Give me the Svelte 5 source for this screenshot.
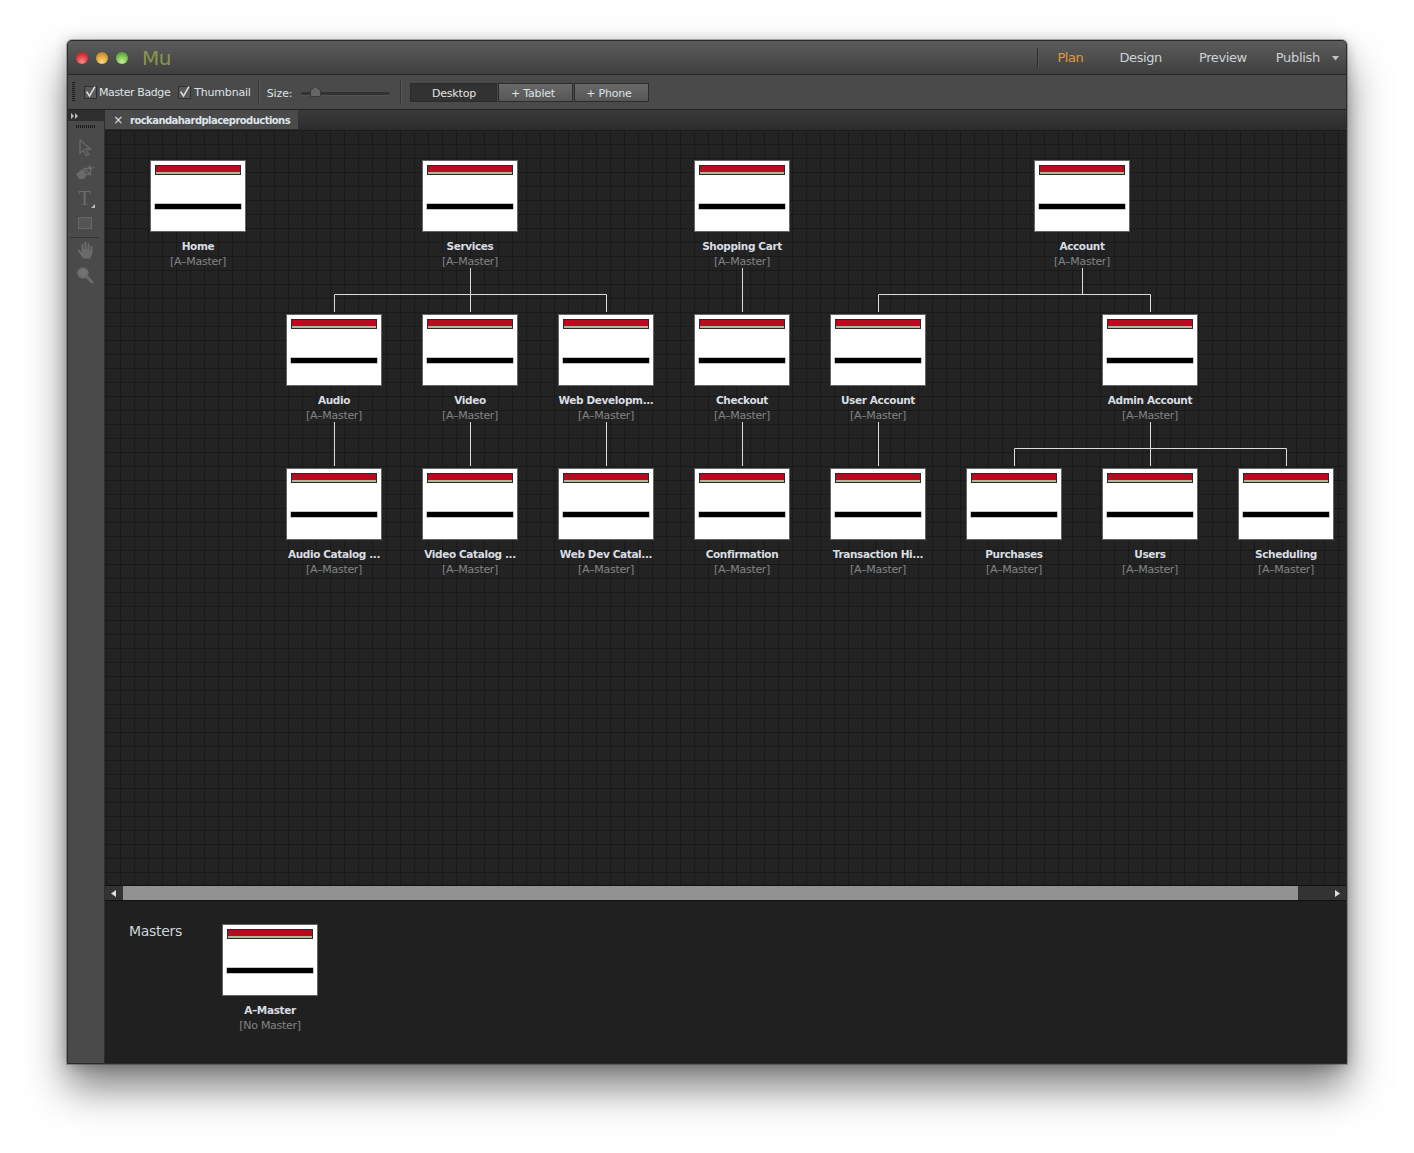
<script>
  const M = '[A–Master]';
  const nodes = [
    ['Home', 198, 0], ['Services', 470, 0], ['Shopping Cart', 742, 0], ['Account', 1082, 0],
    ['Audio', 334, 1], ['Video', 470, 1], ['Web Developm...', 606, 1], ['Checkout', 742, 1], ['User Account', 878, 1], ['Admin Account', 1150, 1],
    ['Audio Catalog ...', 334, 2], ['Video Catalog ...', 470, 2], ['Web Dev Catal...', 606, 2], ['Confirmation', 742, 2], ['Transaction Hi...', 878, 2], ['Purchases', 1014, 2], ['Users', 1150, 2], ['Scheduling', 1286, 2]
  ];
  // canvas origin: x 105, y 130
  const OX = 105, OY = 130;
  const links = [
    'M470.5 268V294.5M334.5 312V294.5H606.5V312M470.5 294.5V312',
    'M742.5 268V312',
    'M1082.5 268V294.5M878.5 312V294.5H1150.5V312',
    'M334.5 422V466M470.5 422V466M606.5 422V466M742.5 422V466M878.5 422V466',
    'M1150.5 422V466M1014.5 466V448.5H1286.5V466'
  ];
</script>

{#snippet thumb()}
  <div class="thumb">
    <div class="redbar"></div>
    <div class="blackbar"></div>
  </div>
{/snippet}

{#snippet tick()}
  <span class="box"><svg width="13" height="13" viewBox="0 0 13 13"><path d="M2.500 5.500L5.500 10L11 .5" fill="none" stroke="#d8d8d8" stroke-width="1.500"/></svg></span>
{/snippet}

<div class="page">
<div class="window">
  <header class="titlebar">
    <div class="lights">
      <span class="light red"></span>
      <span class="light amber"></span>
      <span class="light green"></span>
    </div>
    <div class="logo">Mu</div>
    <nav class="nav">
      <span class="navsep"></span>
      <span class="navitem plan">Plan</span>
      <span class="navitem design">Design</span>
      <span class="navitem preview">Preview</span>
      <span class="navitem publish">Publish</span>
      <svg class="caret" width="7" height="5" viewBox="0 0 7 5"><path d="M0 0H7L3.500 4.500Z" fill="#c4c4c4"/></svg>
    </nav>
  </header>

  <div class="toolbar">
    <span class="grip"></span>
    <label class="check first">
      {@render tick()}
      <span>Master Badge</span>
    </label>
    <label class="check second">
      {@render tick()}
      <span>Thumbnail</span>
    </label>
    <span class="tsep a"></span>
    <span class="sizelabel">Size:</span>
    <div class="slider">
      <svg class="knob" width="11" height="11" viewBox="0 0 11 11"><path d="M.5 4.500L5.500 .5L10.500 4.500V10.500H.5Z" fill="#666" stroke="#3a3a3a"/></svg>
    </div>
    <span class="tsep b"></span>
    <div class="modes">
      <button class="mode desktop">Desktop</button>
      <button class="mode plus">+ Tablet</button>
      <button class="mode plus">+ Phone</button>
    </div>
  </div>

  <div class="body">
    <aside class="tools">
      <div class="collapse">
        <svg width="8" height="6" viewBox="0 0 8 6"><path d="M0 0L3 3L0 6ZM4 0L7 3L4 6Z" fill="#bbb"/></svg>
      </div>
      <div class="toolgrip"></div>
      <div class="toollist">
        <svg class="tool arrow" width="16" height="18" viewBox="0 0 16 18"><path d="M3 1V14L6.500 11L9 16.500L11.500 15.500L9 10H13.500Z" fill="none" stroke="#696969" stroke-width="1.300"/></svg>
        <svg class="tool crop" width="20" height="20" viewBox="0 0 20 20"><path d="M1 10.500L3 10V8.500L4.500 9V7L6 7.500V6L7.500 7L9 8.500L11 10V13L9 16H4Z" fill="#6a6a6a"/><path d="M9 5.500H15.500V11.500H9ZM10 6.500L15 11M15.500 2.500L13.500 5.500M15.500 6V4M19 4L16 6" fill="none" stroke="#6a6a6a" stroke-width="1.400"/></svg>
        <div class="tool ttool">T<i></i></div>
        <div class="tool rect"></div>
        <div class="toolsep"></div>
        <svg class="tool hand" width="18" height="19" viewBox="0 0 18 19"><path d="M1.500 9.500L3 8.500L5.500 11V3.500L6.500 2.500L7.500 3.500V8H8.500V1.500L9.500 .5L10.500 1.500V8H11.500V3L12.500 2L13.500 3V9H14.500V5.500L15.500 4.500L16.500 5.500V12L14.500 17.500H7.500Z" fill="#6a6a6a"/></svg>
        <svg class="tool" width="18" height="18" viewBox="0 0 18 18"><circle cx="7" cy="7" r="5" fill="#727272" stroke="#6a6a6a" stroke-width="1.500"/><path d="M10.500 10.500L16 16" stroke="#6a6a6a" stroke-width="3" stroke-linecap="round"/></svg>
      </div>
    </aside>

    <main class="main">
      <div class="tabbar">
        <div class="tab">
          <span class="tabx">×</span>
          <span>rockandahardplaceproductions</span>
        </div>
      </div>

      <div class="canvas">
        <svg class="links" width="1414" height="800" style="left:{-OX}px;top:{-OY}px">
          {#each links as d}<path {d} fill="none" stroke="#dcdcdc" stroke-width="1"/>{/each}
        </svg>
        {#each nodes as [name, cx, row]}
          <div class="node" style="left:{cx - 68 - OX}px;top:{160 + row * 154 - OY}px">
            {@render thumb()}
            <div class="name">{name}</div>
            <div class="master">{M}</div>
          </div>
        {/each}
      </div>

      <div class="scrollbar">
        <div class="arrowbtn"><svg width="5" height="7" viewBox="0 0 5 7"><path d="M5 0V7L0 3.500Z" fill="#ddd"/></svg></div>
        <div class="scrollthumb"></div>
        <div class="scrollrest"><svg width="5" height="7" viewBox="0 0 5 7"><path d="M0 0V7L5 3.500Z" fill="#ddd"/></svg></div>
      </div>

      <section class="masters">
        <h2>Masters</h2>
        <div class="masternode">
          {@render thumb()}
          <div class="name">A–Master</div>
          <div class="master">[No Master]</div>
        </div>
      </section>
    </main>
  </div>
</div>
</div>

<style>
  :global(body) { margin: 0; background: #fff; }
  .page {
    box-sizing: border-box;
    height: 1153px;
    padding: 40px 0 0 67px;
    overflow: hidden;
  }
  .window {
    box-sizing: border-box;
    width: 1280px;
    height: 1024px;
    display: flex;
    flex-direction: column;
    border-radius: 5px 5px 0 0;
    background: #202020;
    border: 1px solid #2b2b2b;
    box-shadow: 0 0 0 1px rgba(0, 0, 0, .25), 0 24px 40px rgba(0, 0, 0, .5), 0 2px 14px rgba(0, 0, 0, .25);
    font-family: "DejaVu Sans", sans-serif;
    overflow: hidden;
  }

  .titlebar {
    flex: 0 0 33px;
    display: flex;
    align-items: center;
    background: linear-gradient(#5c5c5c, #3f3f3f);
    border-bottom: 1px solid #262626;
    color: #cdd2d8;
    font-size: 13px;
  }
  .lights { display: flex; gap: 8px; margin-left: 8px; margin-top: 1px; }
  .light { width: 12px; height: 12px; border-radius: 50%; display: block; }
  .red { background: radial-gradient(circle at 50% 80%, #f58a8a, #d9323a 60%, #98252b); }
  .amber { background: radial-gradient(circle at 50% 80%, #f6d98a, #d99a2c 60%, #9d7022); }
  .green { background: radial-gradient(circle at 50% 80%, #c6f09a, #6cbb44 60%, #4c8a30); }
  .logo { margin-left: 14px; color: #86974a; font: 20px "DejaVu Sans", sans-serif; letter-spacing: -.5px; }
  .nav { margin-left: auto; display: flex; align-items: center; height: 100%; }
  .navsep { width: 1px; height: 20px; background: #2d2d2d; box-shadow: 1px 0 #555; margin-right: 19px; }
  .navitem { letter-spacing: -.4px; }
  .plan { color: #e29a3a; margin-right: 36px; }
  .design { margin-right: 37px; }
  .preview { margin-right: 29px; }
  .publish { letter-spacing: -.3px; }
  .caret { margin: 1px 7px 0 12px; }

  .toolbar {
    flex: 0 0 35px;
    display: flex;
    align-items: center;
    background: #4a4a4a;
    border-bottom: 1px solid #222;
    box-sizing: border-box;
    color: #dfe2e6;
    font-size: 11px;
    letter-spacing: -.4px;
  }
  .grip { width: 3px; height: 20px; margin-left: 4px; background: repeating-linear-gradient(#1c1c1c 0 1px, #4a4a4a 1px 2px); }
  .check { display: flex; align-items: center; gap: 2px; }
  .first { margin-left: 9px; }
  .second { margin-left: 8px; gap: 3px; letter-spacing: -.2px; }
  .box { width: 13px; height: 13px; display: block; background: #585858; border: 1px solid #303030; box-sizing: border-box; }
  .box svg { display: block; margin: -1px 0 0 -1px; overflow: visible; }
  .tsep { width: 1px; height: 26px; background: #333; box-shadow: 1px 0 #5a5a5a; }
  .tsep.a { margin-left: 7px; }
  .sizelabel { margin-left: 8px; margin-top: 2px; letter-spacing: -.1px; }
  .slider { position: relative; width: 88px; height: 3px; margin-left: 9px; background: #333; border-bottom: 1px solid #555; margin-top: 4px; }
  .knob { position: absolute; left: 9px; top: -6px; }
  .tsep.b { margin-left: 11px; }
  .modes { display: flex; gap: 1px; margin-left: 9px; margin-top: 1px; }
  .mode {
    font: inherit;
    letter-spacing: -.2px;
    color: #dfe2e6;
    height: 19px;
    padding: 1px 0 0;
    border: 1px solid #2c2c2c;
    background: linear-gradient(#696969, #565656);
  }
  .desktop { width: 87px; background: #323232; color: #e2e2e2; }
  .plus { width: 75px; padding-right: 6px; }

  .body { flex: 1; display: flex; min-height: 0; }
  .tools {
    flex: 0 0 37px;
    box-sizing: border-box;
    background: #4a4a4a;
    border-right: 1px solid #2e2e2e;
    display: flex;
    flex-direction: column;
    align-items: center;
  }
  .collapse { align-self: stretch; height: 11px; background: #2f2f2f; padding-left: 3px; display: flex; align-items: center; box-sizing: border-box; }
  .toolgrip { align-self: stretch; height: 9px; background: #4a4a4a; display: flex; justify-content: center; align-items: center; }
  .toolgrip::after { content: ""; width: 20px; height: 3px; margin-top: 1px; margin-right: 1px; background: repeating-linear-gradient(90deg, #1c1c1c 0 1px, #4a4a4a 1px 2px); }
  .toollist { display: flex; flex-direction: column; align-items: center; padding: 9px 3px 0 0; }
  .tool { display: block; }
  .arrow { margin-bottom: 6px; }
  .crop { margin-bottom: 4px; }
  .ttool { position: relative; width: 20px; height: 22px; text-align: center; color: #6a6a6a; font: 20px/22px "Liberation Serif", serif; }
  .ttool i { position: absolute; right: 0; bottom: 1px; border: 2px solid transparent; border-right-color: #bbb; border-bottom-color: #bbb; }
  .rect { box-sizing: border-box; width: 14px; height: 12px; margin-top: 8px; background: #555; border: 1px solid #666; }
  .toolsep { width: 29px; height: 1px; background: #333; margin: 8px 0 3px; }
  .hand { margin-bottom: 6px; }

  .main { flex: 1; display: flex; flex-direction: column; min-width: 0; }
  .tabbar { flex: 0 0 20px; background: linear-gradient(#3a3a3a, #2c2c2c); display: flex; }
  .tab {
    box-sizing: border-box;
    width: 193px;
    height: 19px;
    padding-top: 1px;
    display: flex;
    align-items: center;
    background: #4a4a4a;
    color: #dfe4ea;
    font-size: 10px;
    font-weight: 700;
    letter-spacing: -.55px;
    white-space: nowrap;
  }
  .tabx { flex: none; box-sizing: border-box; width: 25px; padding-left: 1px; text-align: center; font-weight: 400; font-size: 12px; }

  .canvas {
    position: relative;
    flex: 1;
    overflow: hidden;
    background-color: #232323;
    background-image: linear-gradient(90deg, #1a1a1a 1px, transparent 1px), linear-gradient(#1a1a1a 1px, transparent 1px);
    background-size: 14px 14px;
    background-position: 1px 0;
  }
  .links { position: absolute; }
  .node { position: absolute; width: 136px; display: flex; flex-direction: column; align-items: center; }
  .masternode { display: flex; flex-direction: column; align-items: center; width: 96px; margin-left: 40px; margin-top: 23px; }
  .thumb {
    position: relative;
    box-sizing: border-box;
    width: 96px;
    height: 72px;
    background: #fff;
    border: 1px solid #666;
    flex: none;
  }
  .redbar {
    position: absolute;
    left: 4px;
    top: 4px;
    width: 86px;
    height: 10px;
    box-sizing: border-box;
    background: linear-gradient(#b90a1f 0 6.500px, #b4b496 6.500px);
    border: 1px solid #2a2a2a;
  }
  .blackbar {
    position: absolute;
    left: 4px;
    top: 43px;
    width: 86px;
    height: 5px;
    background: #000;
    box-shadow: 0 0 0 .5px #888;
  }
  .name {
    margin-top: 7px;
    font-size: 10.500px;
    line-height: 14px;
    font-weight: 700;
    color: #d9dde2;
    letter-spacing: -.37px;
    white-space: nowrap;
  }
  .master {
    margin-top: 1px;
    font-size: 11px;
    line-height: 15px;
    color: #818386;
    letter-spacing: -.3px;
    white-space: nowrap;
  }
  .scrollbar {
    flex: 0 0 16px;
    display: flex;
    background: #333;
    border-top: 1px solid #111;
    border-bottom: 1px solid #111;
    box-sizing: border-box;
  }
  .arrowbtn { width: 18px; background: #333; display: flex; align-items: center; padding-left: 6px; box-sizing: border-box; }
  .scrollthumb { width: 1175px; background: #929292; }
  .scrollrest { flex: 1; display: flex; align-items: center; justify-content: flex-end; padding-right: 6px; }
  .masters { flex: 0 0 162px; display: flex; background: #202020; align-items: flex-start; }
  .masters h2 { margin: 21px 0 0 24px; color: #cfd4d8; font-size: 14px; font-weight: 400; line-height: 18px; letter-spacing: -.3px; width: 53px; white-space: nowrap; }
</style>
